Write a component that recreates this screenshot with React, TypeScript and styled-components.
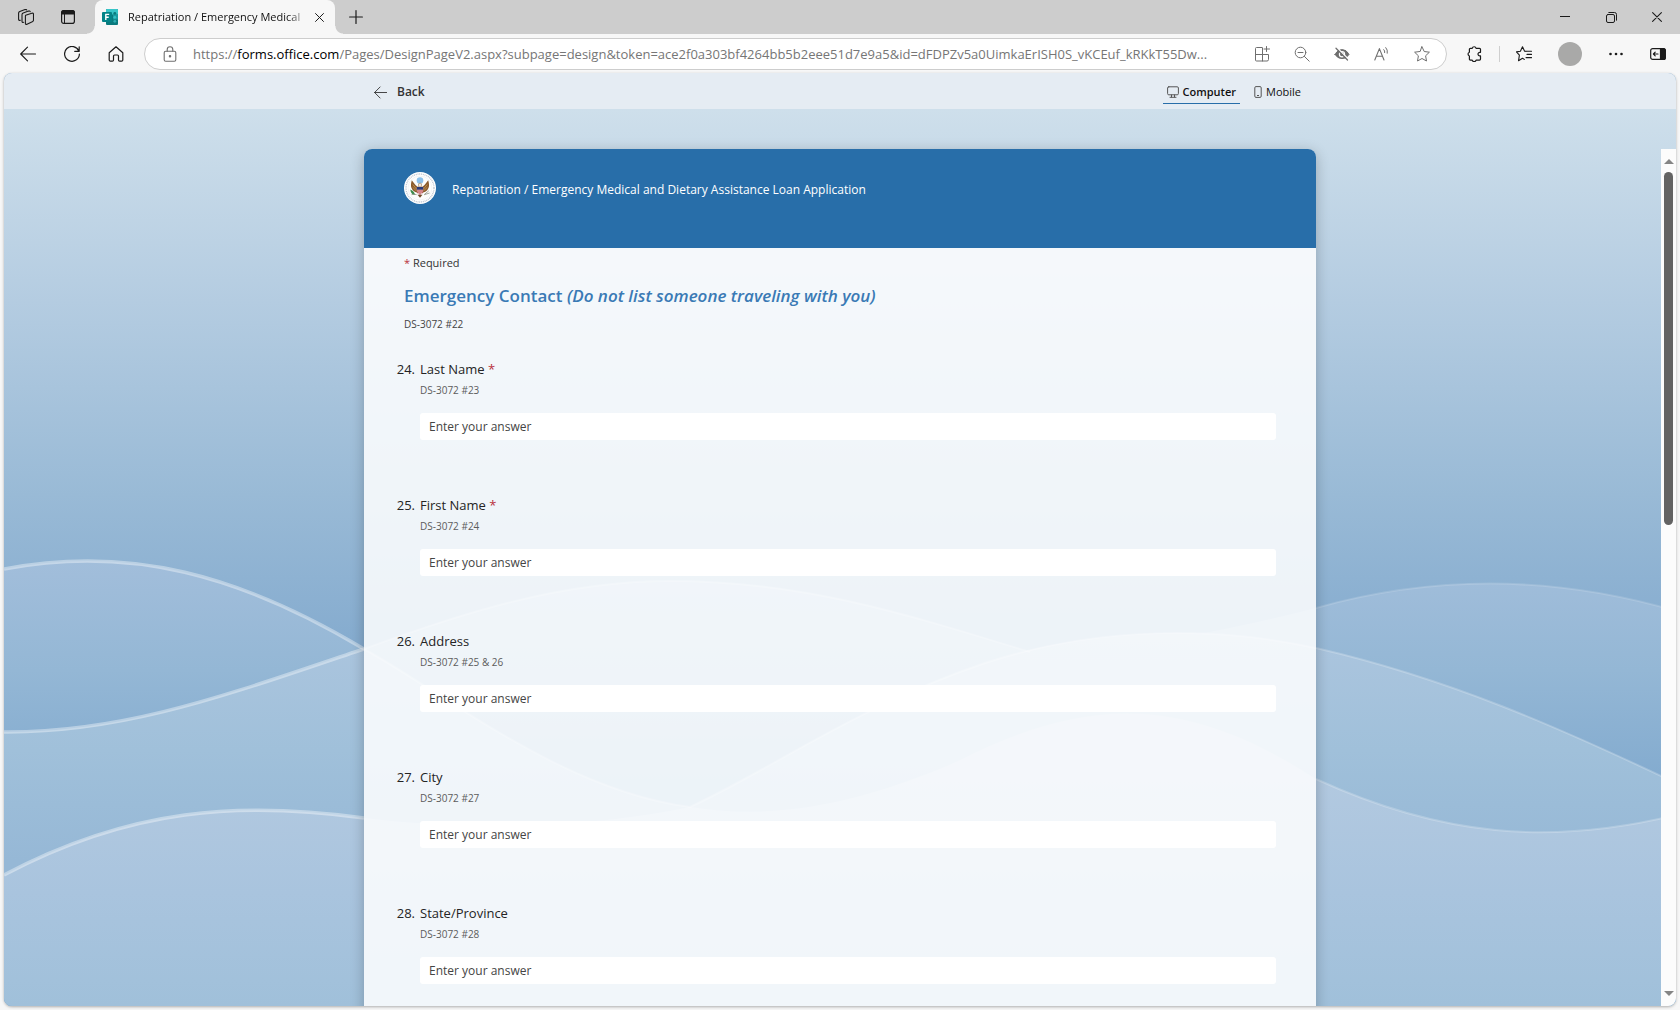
import React, { useState } from "react";
import styled, { createGlobalStyle } from "styled-components";

const GlobalStyle = createGlobalStyle`
  *, *::before, *::after { box-sizing: border-box; }
  html, body { margin: 0; }
  body { background: #f7f7f7; }
  body, button, input { font-family: "Open Sans", "Noto Sans", sans-serif; }
  button { border: 0; padding: 0; background: none; color: inherit; cursor: pointer; }
  h1, h2, p, ol { margin: 0; padding: 0; }
  svg { display: block; flex: none; }
`;

/* ---------- browser frame ---------- */

const Browser = styled.div`
  display: flex;
  flex-direction: column;
  height: 100vh;
  overflow: hidden;
  color: #1b1b1b;
`;

const TabStrip = styled.div`
  display: flex;
  flex: none;
  height: 34px;
  padding-left: 5px;
  background: #cdcdcd;
`;

const StripButton = styled.button<{ $width?: number }>`
  display: flex;
  align-items: center;
  justify-content: center;
  width: ${(p) => p.$width ?? 42}px;
  height: 34px;
`;

const Tab = styled.div`
  position: relative;
  display: flex;
  align-items: center;
  width: 240px;
  margin-left: 6px;
  padding: 0 8px 0 7px;
  background: #f7f7f7;
  border-radius: 8px 8px 0 0;
  &::before, &::after {
    content: "";
    position: absolute;
    bottom: 0;
    width: 8px;
    height: 8px;
  }
  &::before { left: -8px; background: radial-gradient(circle at 0 0, #cdcdcd 7px, #f7f7f7 8px); }
  &::after { right: -8px; background: radial-gradient(circle at 100% 0, #cdcdcd 7px, #f7f7f7 8px); }
`;

const TabTitle = styled.span`
  flex: 1;
  margin: 0 6px 0 10px;
  white-space: nowrap;
  font-size: 11px;
  line-height: 16px;
  color: #111;
  mask-image: linear-gradient(90deg, #000 90%, rgba(0, 0, 0, 0.2) 100%);
`;

const TabClose = styled.button`
  display: flex;
  align-items: center;
  justify-content: center;
  width: 16px;
  height: 16px;
`;

const WindowControls = styled.div`
  display: flex;
  margin-left: auto;
`;

const Toolbar = styled.div`
  display: flex;
  flex: none;
  align-items: center;
  height: 39px;
  padding: 0 4px 0 6px;
  background: #f7f7f7;
`;

const ToolButton = styled.button<{ $width?: number }>`
  display: flex;
  flex: none;
  align-items: center;
  justify-content: center;
  width: ${(p) => p.$width ?? 44}px;
  height: 32px;
`;

const AddressBar = styled.div`
  display: flex;
  flex: 1;
  align-items: center;
  min-width: 0;
  height: 32px;
  margin: 0 6px;
  padding: 0 4px 0 17px;
  background: #fff;
  border: 1px solid #cdcdcd;
  border-radius: 16px;
  color: #6f6f6f;
`;

const AddressText = styled.button`
  flex: 1;
  min-width: 0;
  margin: 0 7px 0 15px;
  overflow: hidden;
  text-align: left;
  text-overflow: ellipsis;
  white-space: nowrap;
  font-size: 13px;
  line-height: 20px;
  color: #767676;
  cursor: text;
  b { font-weight: 400; color: #000; }
`;

const AddressInput = styled.input`
  flex: 1;
  min-width: 0;
  margin: 0 7px 0 15px;
  padding: 0;
  border: 0;
  outline: 0;
  font-size: 13px;
  line-height: 20px;
`;

const ToolGroup = styled.div`
  display: flex;
  flex: none;
  align-items: center;
  gap: 2px;
`;

const Divider = styled.span`
  width: 1px;
  height: 16px;
  background: #cfcfcf;
`;

const Avatar = styled.span`
  width: 24px;
  height: 24px;
  border-radius: 50%;
  background: #a9a9a8;
`;

/* ---------- page ---------- */

const Page = styled.div`
  position: relative;
  display: flex;
  flex: 1;
  flex-direction: column;
  min-height: 0;
  margin: 0 4px 4px;
  overflow: hidden;
  border-radius: 8px;
  box-shadow: 0 1px 3px rgba(0, 0, 0, 0.3);
  background: #84abce;
`;

const PreviewBar = styled.header`
  position: relative;
  display: flex;
  flex: none;
  justify-content: center;
  height: 36px;
  background: #e5ecf3;
`;

const PreviewInner = styled.div`
  display: flex;
  justify-content: space-between;
  align-items: center;
  width: 100%;
  max-width: 952px;
  padding: 2px 11px 0 10px;
`;

const BackButton = styled.button`
  display: flex;
  align-items: center;
  gap: 10px;
  font-size: 12px;
  line-height: 16px;
  font-weight: 600;
  color: #333;
`;

const DeviceTabs = styled.div`
  display: flex;
  gap: 10px;
`;

const DeviceTab = styled.button<{ $active?: boolean }>`
  display: flex;
  align-items: center;
  gap: 4px;
  height: 24px;
  padding: 0 4px;
  border-bottom: 1px solid ${(p) => (p.$active ? "#286ea9" : "transparent")};
  font-size: 11px;
  line-height: 16px;
  font-weight: ${(p) => (p.$active ? 600 : 400)};
  color: #111;
  svg { color: #555; }
`;

const Backdrop = styled.svg`
  position: absolute;
  left: 0;
  top: 36px;
  width: 100%;
  height: calc(100% - 36px);
`;

const ScrollRegion = styled.main`
  position: relative;
  display: grid;
  flex: 1;
  grid-template-columns: 15px minmax(0, 1fr) 15px;
  min-height: 0;
  margin-top: 40px;
`;

const CardColumn = styled.div`
  display: flex;
  grid-column: 2;
  justify-content: center;
  align-items: flex-start;
  min-height: 0;
`;

const Card = styled.article`
  width: 100%;
  max-width: 952px;
  border-radius: 8px 8px 0 0;
  background: rgba(255, 255, 255, 0.85);
  box-shadow: 0 3px 14px rgba(0, 0, 0, 0.24);
`;

const CardHeader = styled.div`
  display: flex;
  gap: 16px;
  height: 99px;
  padding: 23px 40px 0;
  border-radius: 8px 8px 0 0;
  background: #286ea9;
`;

const FormTitle = styled.h1`
  padding-top: 8px;
  font-size: 12px;
  line-height: 20px;
  font-weight: 400;
  color: #fff;
`;

const CardBody = styled.div`
  padding: 7px 40px 40px;
`;

const Star = styled.span`
  color: #b8303a;
`;

const Required = styled.p`
  font-size: 11px;
  line-height: 16px;
  color: #333;
`;

const SectionTitle = styled.h2`
  margin-top: 13px;
  font-size: 17px;
  line-height: 24px;
  font-weight: 600;
  color: #3a7ab5;
`;

const SectionNote = styled.p`
  margin-top: 8px;
  font-size: 10px;
  line-height: 16px;
  color: #444;
`;

const QuestionList = styled.ol`
  display: flex;
  flex-direction: column;
  gap: 55px;
  margin-top: 27px;
  list-style: none;
`;

const Question = styled.li`
  display: grid;
  grid-template-columns: 16px minmax(0, 1fr);
`;

const QuestionNumber = styled.span`
  justify-self: end;
  margin-right: 5px;
  font-size: 13px;
  line-height: 20px;
  color: #242424;
`;

const QuestionLabel = styled.label`
  font-size: 13px;
  line-height: 20px;
  color: #242424;
`;

const QuestionNote = styled.p`
  grid-column: 2;
  margin-top: 1px;
  font-size: 10px;
  line-height: 20px;
  color: #5c5c5c;
`;

const Answer = styled.input`
  grid-column: 2;
  width: 100%;
  height: 27px;
  margin-top: 13px;
  padding: 0 9px;
  border: 0;
  border-radius: 3px;
  background: #fff;
  font-size: 12px;
  color: #333;
  &::placeholder { color: #444; opacity: 1; }
`;

const ScrollTrack = styled.div`
  display: flex;
  grid-column: 3;
  flex-direction: column;
  align-items: center;
  padding: 8px 0;
  background: #fcfcfc;
`;

const ScrollArrow = styled.button<{ $down?: boolean }>`
  width: 0;
  height: 0;
  margin: ${(p) => (p.$down ? "auto 0 2px" : "2px 0 8px")};
  border: 5px solid transparent;
  border-top: ${(p) => (p.$down ? "5px solid #858585" : "0")};
  border-bottom: ${(p) => (p.$down ? "0" : "5px solid #858585")};
`;

const ScrollThumb = styled.div`
  width: 9px;
  height: 42%;
  border-radius: 5px;
  background: #636363;
`;

/* ---------- icons ---------- */

type IconProps = { size?: number; box?: number; width?: number; children: React.ReactNode };
const Icon = ({ size = 16, box = 16, width = 1, children }: IconProps) => (
  <svg width={size} height={size} viewBox={`0 0 ${box} ${box}`} fill="none" stroke="currentColor"
    strokeWidth={width} strokeLinecap="round" strokeLinejoin="round" aria-hidden="true">
    {children}
  </svg>
);

const Workspaces = () => (
  <Icon width={1.1}>
    <path d="M7.6 6.3 13.8 4.2q1.7-.4 1.7 1.2v5.6q0 1.300-1.200 1.800L9 15.200q-1.600.6-1.600-1V7.300q0-.8.2-1z" />
    <path d="M5.700 13.300q-1.700.5-1.700-1V5.700q0-1.200 1.200-1.700l5.300-1.900q1.500-.4 1.700.6" />
    <path d="M2.400 11.300Q.6 11.700.6 10.200V4.100q0-1.200 1.200-1.700L7 .6q1.300-.4 1.700.4" />
  </Icon>
);
const TabActions = () => (
  <Icon width={1.2}>
    <rect x="1.600" y="1.600" width="12.800" height="12.800" rx="2.200" />
    <path d="M1.600 5V3.800q0-2.200 2.200-2.200h8.400q2.200 0 2.200 2.200V5z" fill="currentColor" />
    <path d="M4.500 5v9.400" strokeWidth="1" />
  </Icon>
);
const FormsLogo = () => (
  <svg width="16" height="16" viewBox="0 0 16 16" aria-hidden="true">
    <rect x="4" y="0" width="12" height="16" rx="1" fill="#0a7a7d" />
    <path d="M5 0h10q1 0 1 1v4.500H4V1q0-1 1-1z" fill="#37c5c8" />
    <rect x="11" y="5.500" width="5" height="5" fill="#1a9ba1" />
    <circle cx="12.800" cy="4.300" r="1.400" fill="#0a7a7d" />
    <circle cx="12.800" cy="8.300" r="1.400" fill="#35c0c4" />
    <circle cx="12.800" cy="12.300" r="1.400" fill="#2eaeb3" />
    <rect x="0" y="3" width="10" height="10" rx="1" fill="#038387" />
    <path d="M3.800 11V5.400h3.400M3.800 8.200h2.900" stroke="#fff" strokeWidth="1.400" fill="none" />
  </svg>
);
const Cross = ({ size }: { size: number }) => (
  <Icon size={size} box={10} width={1.1}><path d="M.6.6l8.800 8.800M9.400.6.6 9.400" /></Icon>
);
const Plus = () => <Icon size={14} box={14} width={1.200}><path d="M7 .6v12.800M.6 7h12.800" /></Icon>;
const Minimize = () => <Icon size={10} box={10}><path d="M0 4.500h10" /></Icon>;
const Restore = () => (
  <Icon size={11} box={11}>
    <rect x=".5" y="2.500" width="8" height="8" rx="1.500" />
    <path d="M2.800.5H8.500q2 0 2 2v5.700" />
  </Icon>
);
const BackArrow = ({ size = 16 }: { size?: number }) => (
  <Icon size={size} width={1.100}><path d="M15.500 8H.7M7.500 1.200.7 8l6.800 6.800" /></Icon>
);
const Refresh = () => (
  <Icon width={1.200}><path d="M14.900 5.200A7.400 7.400 0 1 0 15.400 8M15.200.8v4.500h-4.500" /></Icon>
);
const Home = () => (
  <Icon width={1.200}>
    <path d="M1.200 6.800 8 .8l6.800 6v7.200q0 1.200-1.200 1.200h-2q-1.100 0-1.100-1.100V10q0-1-1-1h-3q-1 0-1 1v4.100q0 1.100-1.100 1.100h-2q-1.200 0-1.200-1.200z" />
  </Icon>
);
const Lock = () => (
  <Icon width={1.100}>
    <rect x="2.200" y="5.300" width="11.600" height="10" rx="1.500" />
    <path d="M5.200 5.200V3.600a2.800 2.800 0 0 1 5.600 0v1.600" />
    <circle cx="8" cy="10.200" r=".7" fill="currentColor" />
  </Icon>
);
const AddApp = () => (
  <Icon>
    <path d="M8 1.500H2.500q-1 0-1 1v11.500q0 1 1 1H13q1.500 0 1.500-1.500V8.500h-13M8.500 2v13M12.500.5v5M10 3h5.500" />
  </Icon>
);
const ZoomOut = () => (
  <Icon><circle cx="6.500" cy="6.500" r="5.300" /><path d="M4 6.500h5M10.400 10.400l4.800 4.800" /></Icon>
);
const EyeOff = () => (
  <Icon>
    <path d="M1 8.400Q3.500 3.600 8 3.600t7 4.800Q12.500 12.600 8 12.600T1 8.400z" fill="currentColor" />
    <circle cx="8" cy="8.200" r="2.600" stroke="#fff" strokeWidth="1.200" />
    <path d="M3 1.800 14.600 13.200" stroke="#fff" strokeWidth="1.300" />
    <path d="M2 2.300 13.500 14" strokeWidth="1.300" />
  </Icon>
);
const ReadAloud = () => (
  <Icon width={1.100}>
    <path d="M.8 14 5.400 2.600 10 14M2.400 10.200h6" />
    <path d="M9.800 3.600q1.300 1.200.9 3M11.800 1.600q2.200 2.200 1.500 5.600" strokeWidth="1" />
  </Icon>
);
const StarOutline = () => (
  <Icon><path d="M8 .8l2.200 4.700 5.200.7-3.800 3.600.9 5.200L8 12.500 3.500 15l.9-5.200L.6 6.200l5.200-.7z" /></Icon>
);
const Puzzle = () => (
  <Icon width={1.200}>
    <path d="M5.200 2.300a2 2 0 0 1 3.900 0h3.400q1 0 1 1v3h-.7a1.800 1.800 0 1 0 0 3.600h.7v3.200q0 1-1 1H9.100a2 2 0 0 1-3.900 0H3.400q-1 0-1-1V10a2 2 0 0 1 0-3.800V3.300q0-1 1-1z" />
  </Icon>
);
const Favorites = () => (
  <Icon width={1.100}>
    <path d="M10 5.200h5.500M11 8.400h4.500M10 11.600h5.500" />
    <path d="M8.600 5.300 6.500.8 4.400 5.300l-4 .6 3 3.200-.9 5.700 4-2.600 1.800 1.200M8.600 5.300h1.200" />
  </Icon>
);
const Dots = () => (
  <Icon><g fill="currentColor" stroke="none"><circle cx="2.500" cy="8" r="1.300" /><circle cx="8" cy="8" r="1.300" /><circle cx="13.500" cy="8" r="1.300" /></g></Icon>
);
const Sidebar = () => (
  <Icon width={1.200}>
    <rect x=".7" y="2.600" width="14.600" height="10.800" rx="2" />
    <path d="M10.500 2.600h2.800q2 0 2 2v6.800q0 2-2 2h-2.800z" fill="currentColor" />
    <path d="M8 8H3.400M5.200 6.200 3.400 8l1.800 1.800" />
  </Icon>
);
const Monitor = () => (
  <Icon size={12} box={12}>
    <rect x=".6" y=".8" width="10.800" height="8" rx="1.200" />
    <path d="M4.500 9v2M7.500 9v2M3 11.300h6" />
  </Icon>
);
const Phone = () => (
  <svg width="8" height="12" viewBox="0 0 8 12" fill="none" stroke="currentColor" aria-hidden="true">
    <rect x=".8" y=".6" width="6.400" height="10.800" rx="1.200" /><path d="M3 9.500h2" />
  </svg>
);

const Seal = () => (
  <svg width="32" height="32" viewBox="0 0 32 32" role="img" aria-label="Department of State seal">
    <circle cx="16" cy="16" r="16" fill="#fff" />
    <circle cx="16" cy="16" r="14" fill="none" stroke="#bcc2ce" strokeWidth="1.300" strokeDasharray="1 .8" />
    <circle cx="16" cy="16" r="12" fill="#fdfdfd" stroke="#e2e5ea" strokeWidth=".4" />
    <circle cx="16" cy="8.600" r="3.300" fill="#8cc0ea" />
    <path d="M15 15.500C12.500 14.500 10.500 12 7.800 8.200c-.9 3-1.400 6.200.1 8.600 1 2.300 2.800 3.300 4.900 3.800l2.200 1.600z" fill="#8a5a2c" />
    <path d="M17 15.500c2.500-1 4.500-3.500 7.200-7.300.9 3 1.400 6.200-.1 8.600-1 2.300-2.800 3.300-4.900 3.800l-2.200 1.600z" fill="#8a5a2c" />
    <path d="M8.800 12.500l3.900 4.800M8.600 15.200l3.500 3.400M23.200 12.500l-3.900 4.800M23.400 15.200l-3.500 3.400" stroke="#c99a55" strokeWidth=".8" />
    <path d="M14.600 11.800q1.600-1.400 2.800 0v3h-2.800z" fill="#f2efe6" stroke="#8a5a2c" strokeWidth=".5" />
    <path d="M12.800 15h6.400v4q-1 3-3.200 4.300-2.200-1.300-3.200-4.300z" fill="#f0d9dc" />
    <path d="M12.800 15h6.400v2.800h-6.400z" fill="#2b3a78" />
    <path d="M14 17.800v3.400M16 17.800v4.800M18 17.800v3.400" stroke="#b5323c" />
    <path d="M13.500 22.700 16 25.800l2.500-3.100z" fill="#6f4a2a" />
    <path d="M6.200 17.600q3.400 1 5 5.200-4.200.2-5-5.200z" fill="#3c8a4c" />
    <path d="M7.600 22.600q2.600-.6 5 0M24.800 18.800l-4.600 3.800M25.600 21l-5.200 1.700" stroke="#8b8f84" fill="none" strokeWidth=".8" />
  </svg>
);

/* ---------- wave artwork behind the form ---------- */

const grad = (id: string, y1: number, y2: number, stops: [number, string][]) => (
  <linearGradient id={id} gradientUnits="userSpaceOnUse" x1="0" x2="0" y1={y1} y2={y2}>
    {stops.map(([o, c]) => <stop key={o} offset={o} stopColor={c} />)}
  </linearGradient>
);

const Waves = () => (
  <Backdrop viewBox="4 109 1672 897" preserveAspectRatio="none" aria-hidden="true">
    <defs>
      {grad("sky", 109, 660, [[0, "#cedfeb"], [0.35, "#b4cce1"], [0.7, "#99bad6"], [1, "#83aace"]])}
      {grad("back", 560, 780, [[0, "#a2bedb"], [0.5, "#94b7d5"], [1, "#83abcf"]])}
      {grad("middle", 640, 860, [[0, "#abc5de"], [0.5, "#a0c0da"], [1, "#96b8d6"]])}
      {grad("front", 780, 1006, [[0, "#b2c9e0"], [0.5, "#a9c4de"], [1, "#a0c0da"]])}
    </defs>
    <rect x="4" y="109" width="1672" height="897" fill="url(#sky)" />
    <path d="M4 569C130 545 240 575 364 649C460 614 560 581 670 581C800 581 900 612 1030 652C1120 650 1220 633 1316 608C1440 573 1560 577 1676 611V1006H4z" fill="url(#back)" />
    <path d="M4 732C130 733 240 690 364 649C440 690 560 790 690 807C770 770 860 705 985 663C1100 625 1220 627 1316 648C1450 679 1560 728 1676 783V1006H4z" fill="url(#middle)" />
    <path d="M4 875C130 808 240 801 364 818C480 832 600 826 690 807C780 822 870 800 960 760C1080 700 1180 690 1316 779C1440 836 1550 846 1676 815V1006H4z" fill="url(#front)" />
    <g fill="none" stroke="#fff" strokeOpacity=".38" strokeWidth="3.500">
      <path d="M4 569C130 545 240 575 364 649" />
      <path d="M4 732C130 733 240 690 364 649" />
      <path d="M4 875C130 808 240 801 364 818" />
    </g>
    <g fill="none" stroke="#fff" strokeOpacity=".22" strokeWidth="2">
      <path d="M364 649C460 614 560 581 670 581C800 581 900 612 1030 652" />
      <path d="M364 649C440 690 560 790 690 807C770 770 860 705 985 663C1100 625 1220 627 1316 648" />
      <path d="M1316 608C1440 573 1560 577 1676 611" strokeOpacity=".14" />
      <path d="M1316 648C1450 679 1560 728 1676 783" />
      <path d="M1316 779C1440 836 1550 846 1676 815" />
    </g>
  </Backdrop>
);

/* ---------- content ---------- */

const host = "forms.office.com";
const path = "/Pages/DesignPageV2.aspx?subpage=design&token=ace2f0a303bf4264bb5b2eee51d7e9a5&id=dFDPZv5a0UimkaErISH0S_vKCEuf_kRKkT55Dw...";

const questions = [
  { n: 24, label: "Last Name", note: "DS-3072 #23", required: true },
  { n: 25, label: "First Name", note: "DS-3072 #24", required: true },
  { n: 26, label: "Address", note: "DS-3072 #25 & 26" },
  { n: 27, label: "City", note: "DS-3072 #27" },
  { n: 28, label: "State/Province", note: "DS-3072 #28" },
];

const Address = () => {
  const [editing, setEditing] = useState(false);
  return editing ? (
    <AddressInput autoFocus aria-label="Address" defaultValue={`https://${host}${path}`} onBlur={() => setEditing(false)} />
  ) : (
    <AddressText onClick={() => setEditing(true)}>https://<b>{host}</b>{path}</AddressText>
  );
};

export default function App() {
  const [device, setDevice] = useState("computer");
  return (
    <Browser>
      <GlobalStyle />
      <TabStrip>
        <StripButton aria-label="Workspaces"><Workspaces /></StripButton>
        <StripButton aria-label="Tab actions"><TabActions /></StripButton>
        <Tab>
          <FormsLogo />
          <TabTitle>Repatriation / Emergency Medical</TabTitle>
          <TabClose aria-label="Close tab"><Cross size={9} /></TabClose>
        </Tab>
        <StripButton aria-label="New tab"><Plus /></StripButton>
        <WindowControls>
          <StripButton $width={46} aria-label="Minimize"><Minimize /></StripButton>
          <StripButton $width={46} aria-label="Restore"><Restore /></StripButton>
          <StripButton $width={46} aria-label="Close"><Cross size={10} /></StripButton>
        </WindowControls>
      </TabStrip>

      <Toolbar>
        <ToolButton aria-label="Back"><BackArrow /></ToolButton>
        <ToolButton aria-label="Refresh"><Refresh /></ToolButton>
        <ToolButton aria-label="Home"><Home /></ToolButton>
        <AddressBar>
          <Lock />
          <Address />
          <ToolButton $width={40} aria-label="Install app"><AddApp /></ToolButton>
          <ToolButton $width={40} aria-label="Zoom out"><ZoomOut /></ToolButton>
          <ToolButton $width={40} aria-label="Tracking blocked"><EyeOff /></ToolButton>
          <ToolButton $width={40} aria-label="Read aloud"><ReadAloud /></ToolButton>
          <ToolButton $width={40} aria-label="Add to favorites"><StarOutline /></ToolButton>
        </AddressBar>
        <ToolGroup>
          <ToolButton aria-label="Extensions"><Puzzle /></ToolButton>
          <Divider />
          <ToolButton aria-label="Favorites"><Favorites /></ToolButton>
          <ToolButton aria-label="Profile"><Avatar /></ToolButton>
          <ToolButton aria-label="Settings and more"><Dots /></ToolButton>
          <ToolButton $width={36} aria-label="Sidebar"><Sidebar /></ToolButton>
        </ToolGroup>
      </Toolbar>

      <Page>
        <Waves />
        <PreviewBar>
          <PreviewInner>
            <BackButton><BackArrow size={13} />Back</BackButton>
            <DeviceTabs role="tablist">
              <DeviceTab role="tab" aria-selected={device === "computer"} $active={device === "computer"} onClick={() => setDevice("computer")}>
                <Monitor />Computer
              </DeviceTab>
              <DeviceTab role="tab" aria-selected={device === "mobile"} $active={device === "mobile"} onClick={() => setDevice("mobile")}>
                <Phone />Mobile
              </DeviceTab>
            </DeviceTabs>
          </PreviewInner>
        </PreviewBar>
        <ScrollRegion>
          <CardColumn>
            <Card>
              <CardHeader>
                <Seal />
                <FormTitle>Repatriation / Emergency Medical and Dietary Assistance Loan Application</FormTitle>
              </CardHeader>
              <CardBody>
                <Required><Star>*</Star> Required</Required>
                <SectionTitle>Emergency Contact <em>(Do not list someone traveling with you)</em></SectionTitle>
                <SectionNote>DS-3072 #22</SectionNote>
                <QuestionList>
                  {questions.map((q) => (
                    <Question key={q.n}>
                      <QuestionNumber>{q.n}.</QuestionNumber>
                      <QuestionLabel htmlFor={`q${q.n}`}>{q.label} {q.required && <Star>*</Star>}</QuestionLabel>
                      <QuestionNote>{q.note}</QuestionNote>
                      <Answer id={`q${q.n}`} type="text" placeholder="Enter your answer" />
                    </Question>
                  ))}
                </QuestionList>
              </CardBody>
            </Card>
          </CardColumn>
          <ScrollTrack>
            <ScrollArrow aria-label="Scroll up" />
            <ScrollThumb />
            <ScrollArrow $down aria-label="Scroll down" />
          </ScrollTrack>
        </ScrollRegion>
      </Page>
    </Browser>
  );
}
